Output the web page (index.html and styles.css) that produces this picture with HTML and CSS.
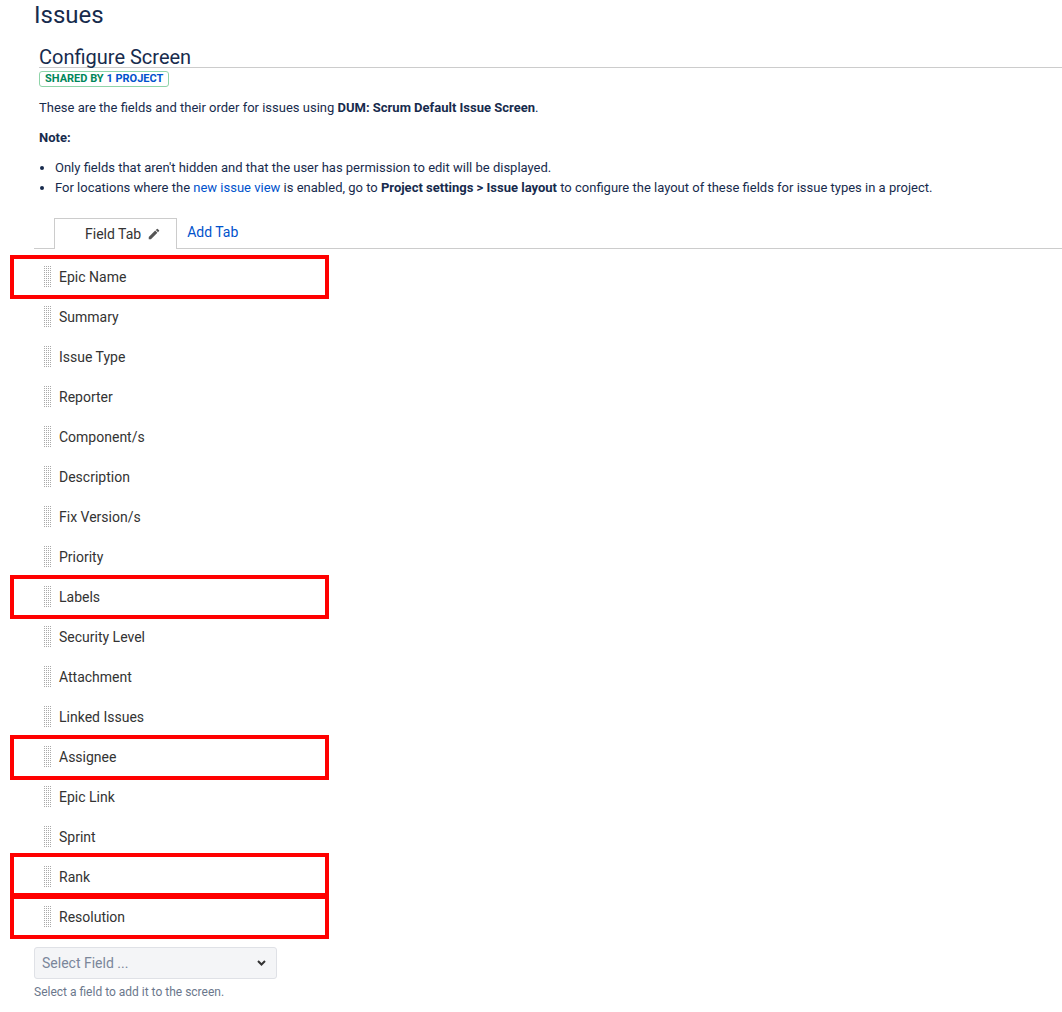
FILE: index.html
```html
<!DOCTYPE html>
<html>
<head>
<meta charset="utf-8">
<link rel="stylesheet" href="styles.css">
</head>
<body>
<div class="page">
  <h1 class="page-title">Issues</h1>
  <div class="screen-head">
    <h2 class="screen-title">Configure Screen</h2>
    <span class="lozenge"><span class="loz-green">SHARED BY</span> <span class="loz-blue">1 PROJECT</span></span>
    <p class="desc">These are the fields and their order for issues using <strong>DUM: Scrum Default Issue Screen</strong>.</p>
    <p class="desc"><strong>Note:</strong></p>
    <ul class="notes">
      <li>Only fields that aren't hidden and that the user has permission to edit will be displayed.</li>
      <li>For locations where the <a href="#" class="link">new issue view</a> is enabled, go to <strong>Project settings &gt; Issue layout</strong> to configure the layout of these fields for issue types in a project.</li>
    </ul>
  </div>
  <div class="tabs">
    <div class="tab active">Field Tab
      <svg class="pencil" width="14" height="14" viewBox="0 0 24 24"><path fill="#555" d="M3 17.25V21h3.75L17.81 9.94l-3.75-3.75L3 17.25zM20.71 7.04a1 1 0 0 0 0-1.41l-2.34-2.34a1 1 0 0 0-1.41 0l-1.83 1.83 3.75 3.75 1.83-1.83z"/></svg>
    </div>
    <a href="#" class="tab-add">Add Tab</a>
  </div>
  <ul class="fields">
    <li class="field hl"><span class="grip"></span>Epic Name</li>
    <li class="field"><span class="grip"></span>Summary</li>
    <li class="field"><span class="grip"></span>Issue Type</li>
    <li class="field"><span class="grip"></span>Reporter</li>
    <li class="field"><span class="grip"></span>Component/s</li>
    <li class="field"><span class="grip"></span>Description</li>
    <li class="field"><span class="grip"></span>Fix Version/s</li>
    <li class="field"><span class="grip"></span>Priority</li>
    <li class="field hl"><span class="grip"></span>Labels</li>
    <li class="field"><span class="grip"></span>Security Level</li>
    <li class="field"><span class="grip"></span>Attachment</li>
    <li class="field"><span class="grip"></span>Linked Issues</li>
    <li class="field hl hl-tall"><span class="grip"></span>Assignee</li>
    <li class="field"><span class="grip"></span>Epic Link</li>
    <li class="field"><span class="grip"></span>Sprint</li>
    <li class="field hl hl-up"><span class="grip"></span>Rank</li>
    <li class="field hl"><span class="grip"></span>Resolution</li>
  </ul>
  <div class="select">
    <span class="select-ph">Select Field ...</span>
    <svg class="chev" width="9" height="6" viewBox="0 0 9 6"><path d="M1 1l3.5 3.5L8 1" fill="none" stroke="#333" stroke-width="2"/></svg>
  </div>
  <div class="help">Select a field to add it to the screen.</div>
</div>
</body>
</html>
```
FILE: styles.css
```css
html, body {
  margin: 0;
  padding: 0;
  background: #fff;
}
body {
  font-family: Roboto, "Liberation Sans", Arial, sans-serif;
  color: #172b4d;
}
.page {
  padding-left: 34px;
}
.page-title {
  margin: 0;
  padding-top: 1px;
  font-size: 24px;
  line-height: 28px;
  font-weight: 400;
  color: #172b4d;
}
.screen-head {
  padding-left: 5px;
}
.screen-title {
  margin: 18px 0 0 0;
  font-size: 20px;
  line-height: 20px;
  font-weight: 400;
  color: #172b4d;
  border-bottom: 1px solid #ccc;
  padding-bottom: 0;
}
.lozenge {
  display: block;
  width: fit-content;
  margin-top: 3px;
  border: 1px solid #8fd4a9;
  border-radius: 3px;
  padding: 0 5px;
  font-size: 11px;
  line-height: 14px;
  font-weight: 700;
}
.loz-green { color: #00875a; }
.loz-blue { color: #0052cc; }
.desc {
  margin: 10px 0 0 0;
  font-size: 13px;
  line-height: 20px;
}
.lozenge + .desc {
  margin-top: 11px;
}
.desc strong, .notes strong { font-weight: 700; }
.notes {
  margin: 10px 0 0 0;
  padding-left: 16px;
  font-size: 13px;
  line-height: 20px;
}
.link {
  color: #0052cc;
  text-decoration: none;
}
.tabs {
  margin-top: 20px;
  display: flex;
  align-items: flex-end;
  border-bottom: 1px solid #ccc;
  padding-left: 20px;
  height: 30px;
}
.tab {
  display: flex;
  align-items: center;
  gap: 6px;
  box-sizing: border-box;
  padding: 0 15px 0 30px;
  border: 1px solid #ccc;
  border-bottom: none;
  background: #fff;
  margin-bottom: -1px;
  height: 31px;
  font-size: 14px;
  color: #333;
}
.pencil { display: block; }
.tab-add {
  align-self: center;
  margin-left: 10px;
  padding-bottom: 3px;
  font-size: 14px;
  color: #0052cc;
  text-decoration: none;
}
.fields {
  list-style: none;
  margin: 8px 0 0 0;
  padding: 0;
}
.field {
  position: relative;
  display: flex;
  align-items: center;
  height: 40px;
  font-size: 14px;
  color: #333;
  padding-left: 9px;
}
.grip {
  width: 8px;
  height: 22px;
  margin-right: 8px;
  background-image: conic-gradient(#a9a9a9 25%, transparent 0);
  background-size: 2px 2px;
}
.hl::after {
  content: "";
  position: absolute;
  left: -24px;
  top: -2px;
  width: 319px;
  height: 44px;
  box-sizing: border-box;
  border: 4px solid #ff0000;
}
.hl-tall::after { height: 45px; }
.hl-up::after { top: -4px; }
.select {
  margin-top: 10px;
  width: 243px;
  height: 32px;
  box-sizing: border-box;
  background: #f4f5f7;
  border: 1px solid #dfe1e6;
  border-radius: 3px;
  display: flex;
  align-items: center;
  justify-content: space-between;
  padding: 0 10px 0 7px;
}
.select-ph {
  font-size: 14px;
  color: #7a869a;
}
.chev { display: block; }
.help {
  margin-top: 6px;
  font-size: 12px;
  line-height: 15px;
  color: #6b778c;
}
```
